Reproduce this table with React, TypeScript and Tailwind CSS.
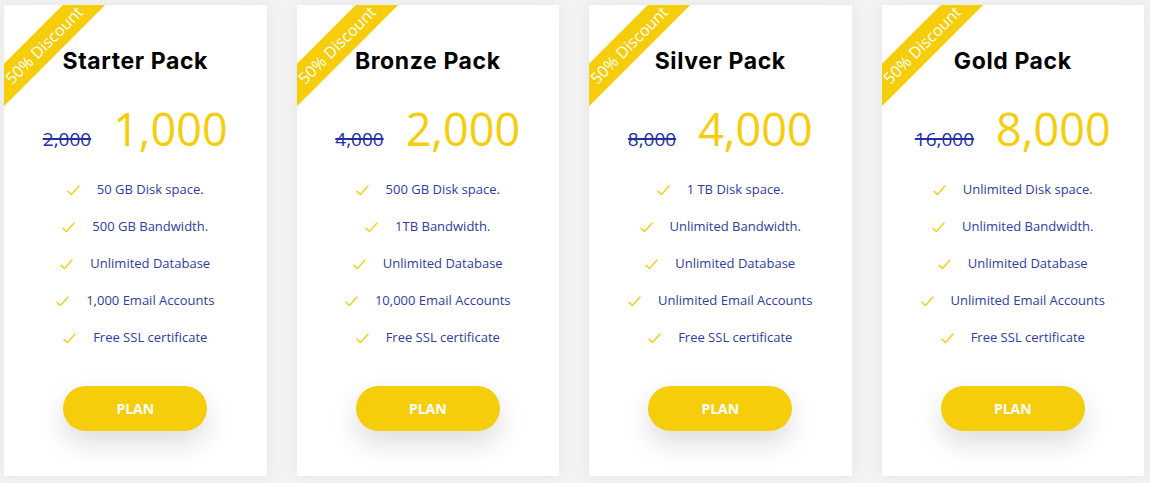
import React from "react";

type Plan = {
  name: string;
  oldPrice: string;
  price: string;
  features: string[];
};

const plans: Plan[] = [
  {
    name: "Starter Pack",
    oldPrice: "2,000",
    price: "1,000",
    features: ["50 GB Disk space.", "500 GB Bandwidth.", "Unlimited Database", "1,000 Email Accounts", "Free SSL certificate"],
  },
  {
    name: "Bronze Pack",
    oldPrice: "4,000",
    price: "2,000",
    features: ["500 GB Disk space.", "1TB Bandwidth.", "Unlimited Database", "10,000 Email Accounts", "Free SSL certificate"],
  },
  {
    name: "Silver Pack",
    oldPrice: "8,000",
    price: "4,000",
    features: ["1 TB Disk space.", "Unlimited Bandwidth.", "Unlimited Database", "Unlimited Email Accounts", "Free SSL certificate"],
  },
  {
    name: "Gold Pack",
    oldPrice: "16,000",
    price: "8,000",
    features: ["Unlimited Disk space.", "Unlimited Bandwidth.", "Unlimited Database", "Unlimited Email Accounts", "Free SSL certificate"],
  },
];

// thin yellow tick in front of every feature
const Check = () => (
  <svg width="13" height="11" viewBox="0 0 13 11" fill="none" className="shrink-0">
    <path d="M1 6.2 L4.4 9.6 L12 1" stroke="#f5cd0b" strokeWidth="1.4" strokeLinecap="round" strokeLinejoin="round" />
  </svg>
);

const PriceCard = ({ plan }: { plan: Plan }) => {
  return (
    <div className="relative h-[471px] overflow-hidden bg-white shadow-[0_0_18px_rgba(0,0,0,0.06)]">
      {/* corner ribbon */}
      <div className="absolute left-[-60px] top-[25px] flex h-[30px] w-[200px] -rotate-45 items-center justify-center bg-[#f5cd0b] text-[16px] text-white [font-family:'Open_Sans',sans-serif]">
        50% Discount
      </div>

      <div className="flex flex-col items-center pt-[40px]">
        <h3 className="text-[23px] font-bold leading-[33px] tracking-[0.6px] text-black [font-family:Inter,sans-serif]">
          {plan.name}
        </h3>

        <div className="mt-[28px] flex items-baseline gap-[22px] [font-family:'Open_Sans',sans-serif]">
          <span className="text-[19px] text-[#2230a6] line-through decoration-[1.5px]">{plan.oldPrice}</span>
          <span className="text-[45px] leading-none text-[#f5cd0b]">{plan.price}</span>
        </div>

        <ul className="mt-[18px] flex flex-col [font-family:'Open_Sans',sans-serif]">
          {plan.features.map((f) => (
            <li key={f} className="flex h-[37px] items-center justify-center gap-[17px] text-[13px] text-[#2f3ca3]">
              <Check />
              <span>{f}</span>
            </li>
          ))}
        </ul>

        <button className="mt-[29px] h-[45px] w-[144px] rounded-full bg-[#f5cd0b] text-[14px] font-bold text-white shadow-[0_12px_28px_rgba(0,0,0,0.14)] [font-family:'Open_Sans',sans-serif]">
          PLAN
        </button>
      </div>
    </div>
  );
};

export default function App() {
  return (
    <div className="h-[483px] w-[1150px] bg-[#f3f3f3] pl-[4px] pr-[6px] pt-[5px]">
      <div className="grid grid-cols-4 gap-[30px]">
        {plans.map((p) => (
          <PriceCard key={p.name} plan={p} />
        ))}
      </div>
    </div>
  );
}
